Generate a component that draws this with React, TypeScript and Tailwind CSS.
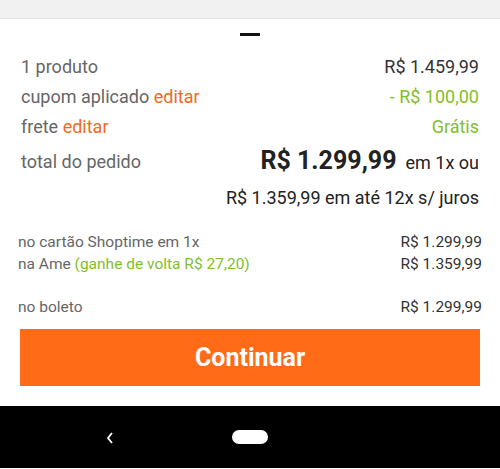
import React from 'react';

const Row: React.FC<{ className?: string; children: React.ReactNode }> = ({ className = '', children }) => (
  <div className={`flex items-center justify-between ${className}`}>{children}</div>
);

export default function App() {
  return (
    <div className="w-[500px] h-[469px] bg-white overflow-hidden font-['Roboto',sans-serif]">
      <div className="h-[19px] bg-[#f1f1f1] border-b border-[#e2e2e2]" />
      <div className="flex justify-center pt-[14px]">
        <div className="w-5 h-[3px] bg-[#111]" />
      </div>

      <div className="px-[21px] mt-[15px] text-[18px] text-[#666]">
        <Row className="h-[30px]">
          <span>1 produto</span>
          <span className="text-[#333]">R$ 1.459,99</span>
        </Row>
        <Row className="h-[30px]">
          <span>
            cupom aplicado <span className="text-[#f26a24]">editar</span>
          </span>
          <span className="text-[#82bf2d]">- R$ 100,00</span>
        </Row>
        <Row className="h-[30px]">
          <span>
            frete <span className="text-[#f26a24]">editar</span>
          </span>
          <span className="text-[#82bf2d]">Grátis</span>
        </Row>
        <Row className="h-[30px] mt-[5px]">
          <span>total do pedido</span>
          <span className="flex items-baseline gap-[9px] text-[#222]">
            <span className="text-[25px] font-bold">R$ 1.299,99</span>
            <span>em 1x ou</span>
          </span>
        </Row>
        <div className="h-[26px] mt-[8px] flex items-center justify-end text-[#222]">
          R$ 1.359,99 em até 12x s/ juros
        </div>
      </div>

      <div className="px-[18px] text-[15.5px] text-[#666]">
        <Row className="h-[22px] mt-[22px]">
          <span>no cartão Shoptime em 1x</span>
          <span className="text-[#333]">R$ 1.299,99</span>
        </Row>
        <Row className="h-[22px]">
          <span>
            na Ame <span className="text-[#82bf2d]">(ganhe de volta R$ 27,20)</span>
          </span>
          <span className="text-[#333]">R$ 1.359,99</span>
        </Row>
        <Row className="h-[22px] mt-[21px]">
          <span>no boleto</span>
          <span className="text-[#333]">R$ 1.299,99</span>
        </Row>
      </div>

      <button className="mt-[10px] mx-[20px] w-[460px] h-[57px] bg-[#ff6b17] text-white text-[25px] font-bold flex items-center justify-center">
        Continuar
      </button>

      <div className="mt-[20px] h-[62px] bg-black relative">
        <svg className="absolute left-[105px] top-[25px]" width="10" height="14" viewBox="0 0 10 14">
          <path d="M7 2 L3 7 L7 12" fill="none" stroke="white" strokeWidth="1.8" />
        </svg>
        <div className="absolute left-[232px] top-[24px] w-[36px] h-[14px] rounded-full bg-white" />
      </div>
    </div>
  );
}
